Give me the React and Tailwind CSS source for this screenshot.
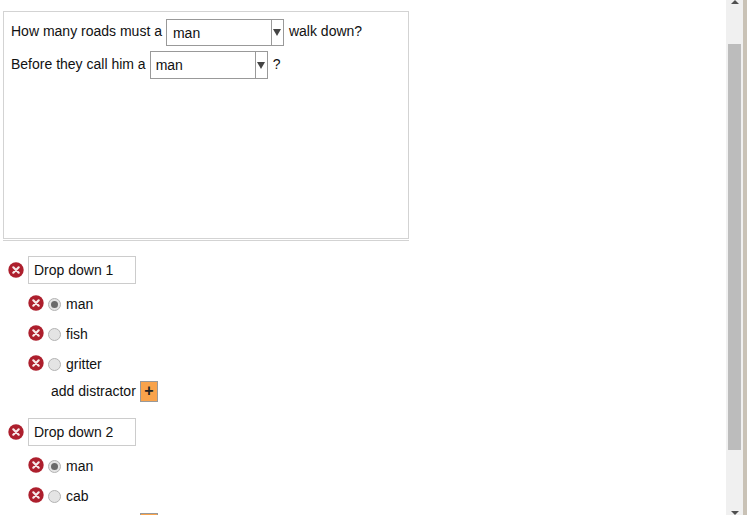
import React from "react";

const RemoveIcon = ({ className = "" }) => (
  <svg width="16" height="16" viewBox="0 0 16 16" className={"shrink-0 " + className}>
    <circle cx="8" cy="8" r="7.7" fill="#ad1f2d" />
    <path d="M5.3 5.3L10.7 10.7M10.7 5.3L5.3 10.7" stroke="#f8eaea" strokeWidth="2.2" strokeLinecap="round" />
  </svg>
);

const Radio = ({ checked }) => (
  <span className="w-[13px] h-[13px] ml-[4px] shrink-0 rounded-full border border-[#b3b3b3] bg-[#e4e4e4] flex items-center justify-center">
    {checked && <span className="w-[7px] h-[7px] rounded-full bg-[#6a6a6a]" />}
  </span>
);

const Select = ({ value, textClass }) => (
  <span className="w-[118px] h-full ml-1 mr-[5px] border border-[#999999] flex items-stretch bg-white">
    <span className={"flex-1 pt-[4px] leading-[18px] " + textClass}>{value}</span>
    <span className="w-3 border-l border-[#999999] flex items-center justify-center">
      <span className="w-0 h-0 border-l-[4px] border-r-[4px] border-t-[7px] border-l-transparent border-r-transparent border-t-[#444444]" />
    </span>
  </span>
);

const Option = ({ label, checked }) => (
  <div className="flex items-center h-[30px] pl-[28px]">
    <RemoveIcon className="mb-[3px]" />
    <Radio checked={checked} />
    <span className="ml-[5px] mt-[1px]">{label}</span>
  </div>
);

const AddDistractor = () => (
  <div className="flex items-center h-[24px] pl-[51px]">
    <span>add distractor</span>
    <button className="w-[18px] h-[21px] ml-[4px] bg-[#f9a34b] border border-[#999999] text-[#222222] text-[16px] font-bold leading-none">+</button>
  </div>
);

const DropDown = ({ title, children }) => (
  <div className="mb-[15px]">
    <div className="flex items-center h-[28px] pl-2 mb-[5px]">
      <RemoveIcon />
      <input
        readOnly
        value={title}
        className="w-[108px] h-[28px] ml-[4px] pl-[5px] border border-[#cccccc] outline-none"
      />
    </div>
    {children}
  </div>
);

export default function App() {
  return (
    <div className="h-[515px] w-[747px] overflow-hidden flex bg-white text-[14px] text-[#111111] font-['Liberation_Sans',Arial,sans-serif]">
      <div className="flex-1 min-w-0 pt-[11px] pl-[3px]">
        <div className="w-[406px] border-b border-[#d3d3d3] pb-[1px]">
          <div className="h-[228px] border border-[#d3d3d3] pl-[7px] pt-[7px]">
            <div className="flex items-center h-[27px]">
              <span className="mb-[3px]">How many roads must a</span>
              <Select value="man" textClass="pl-[6px]" />
              <span className="mb-[3px]">walk down?</span>
            </div>
            <div className="flex items-center h-[28px] mt-[5px]">
              <span className="mb-[2px]">Before they call him a</span>
              <Select value="man" textClass="pl-[5px]" />
              <span className="mb-[2px]">?</span>
            </div>
          </div>
        </div>
        <div className="-ml-[3px] mt-[15px]">
          <DropDown title="Drop down 1">
            <Option label="man" checked />
            <Option label="fish" />
            <Option label="gritter" />
            <AddDistractor />
          </DropDown>
          <DropDown title="Drop down 2">
            <Option label="man" checked />
            <Option label="cab" />
            <AddDistractor />
          </DropDown>
        </div>
      </div>
      <div className="w-[21px] shrink-0 flex">
        <div className="w-[17px] bg-[#f0f0f0] flex flex-col items-center">
          <span className="w-0 h-0 border-l-[4px] border-r-[4px] border-b-[4px] border-l-transparent border-r-transparent border-b-[#505050]" />
          <span className="mt-[40px] w-[13px] h-[406px] bg-[#bcbcbc]" />
          <span className="mt-auto w-0 h-0 border-l-[4px] border-r-[4px] border-t-[4px] border-l-transparent border-r-transparent border-t-[#505050]" />
        </div>
        <div className="w-[4px] bg-[#c9c2b6]" />
      </div>
    </div>
  );
}
